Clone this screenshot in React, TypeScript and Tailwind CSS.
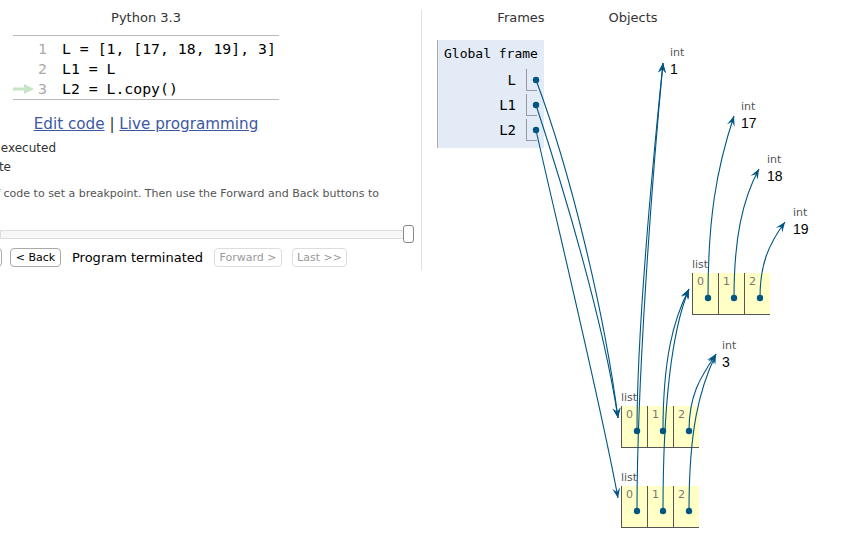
import React from "react";

const C = "#005583";

type Arrow = { d: [number, number, number, number, number, number, number, number] };

const arrows: Arrow["d"][] = [
  // frame -> lists
  [536, 80, 570, 170, 604, 310, 618, 418],
  [536, 105, 564, 190, 603, 320, 618, 418],
  [536, 130, 556, 220, 600, 400, 618, 498],
  // list element 0 -> int 1
  [637, 431, 637, 330, 652, 170, 663, 63],
  [637, 511, 637, 380, 652, 180, 663, 63],
  // element 1 -> inner list
  [663, 431, 663, 360, 673, 320, 689, 289],
  [663, 511, 663, 400, 672, 330, 689, 289],
  // element 2 -> int 3
  [689, 431, 689, 395, 700, 378, 716, 354],
  [689, 511, 689, 430, 699, 390, 716, 354],
  // inner list -> 17 18 19
  [708, 298, 708, 220, 716, 170, 734, 116],
  [734, 298, 734, 240, 742, 200, 759, 169],
  [760, 298, 760, 265, 768, 245, 785, 222],
];

const dots: [number, number][] = [
  [536, 80],
  [536, 105],
  [536, 130],
  [637, 431],
  [663, 431],
  [689, 431],
  [637, 511],
  [663, 511],
  [689, 511],
  [708, 298],
  [734, 298],
  [760, 298],
];

function head(a: Arrow["d"]) {
  const [, , , , cx, cy, ex, ey] = a;
  let dx = ex - cx;
  let dy = ey - cy;
  const len = Math.hypot(dx, dy) || 1;
  dx /= len;
  dy /= len;
  const L = 10;
  const W = 8;
  const px = -dy;
  const py = dx;
  const bx = ex - dx * L;
  const by = ey - dy * L;
  const nx = ex - dx * L * 0.6;
  const ny = ey - dy * L * 0.6;
  return `${ex},${ey} ${bx + (px * W) / 2},${by + (py * W) / 2} ${nx},${ny} ${bx - (px * W) / 2},${by - (py * W) / 2}`;
}

function IntObj({ x, y, v }: { x: number; y: number; v: string }) {
  return (
    <div className="absolute flex flex-col" style={{ left: x, top: y }}>
      <div className="h-[13px] text-[11px] leading-[13px] text-[#555] font-['DejaVu_Sans',sans-serif]">int</div>
      <div className="mt-[2px] text-[14px] leading-[16px] text-black font-['Liberation_Sans',sans-serif]">{v}</div>
    </div>
  );
}

function ListObj({ x, y }: { x: number; y: number }) {
  return (
    <div className="absolute flex flex-col" style={{ left: x, top: y }}>
      <div className="h-[13px] text-[11px] leading-[13px] text-[#555] font-['DejaVu_Sans',sans-serif]">list</div>
      <div className="mt-[2px] flex">
        {["0", "1", "2"].map((i) => (
          <div
            key={i}
            className="w-[26px] h-[42px] border-l border-b border-[#555] bg-[#ffffc6] pl-[4px] pt-[2px] text-[11px] leading-[13px] text-[#777] font-['DejaVu_Sans',sans-serif]"
          >
            {i}
          </div>
        ))}
      </div>
    </div>
  );
}

const codeLines = ["L = [1, [17, 18, 19], 3]", "L1 = L", "L2 = L.copy()"];

export default function App() {
  return (
    <div className="relative w-[862px] h-[555px] bg-white overflow-hidden flex font-['DejaVu_Sans',sans-serif] text-[#333]">
      {/* Left panel */}
      <div className="w-[421px] shrink-0 flex flex-col pt-[9px]">
        <div className="ml-[13px] w-[266px] h-[18px] leading-[18px] text-center text-[13px] text-[#333]">Python 3.3</div>
        <div className="ml-[13px] w-[266px] mt-[8px] border-t border-b border-[#bbb] pt-[3px]">
          {codeLines.map((line, i) => (
            <div key={i} className="flex items-center h-[20px] font-['DejaVu_Sans_Mono',monospace] text-[14.8px]">
              <div className="w-[24px] h-[20px] flex items-center">
                {i === 2 && (
                  <svg width="21" height="10" viewBox="0 0 21 10">
                    <rect x="0" y="3.5" width="13" height="3" fill="#c6e4c6" />
                    <polygon points="11,0 21,5 11,10" fill="#c6e4c6" />
                  </svg>
                )}
              </div>
              <div className="w-[10px] text-right text-[#aaa]">{i + 1}</div>
              <div className="ml-[15px] whitespace-pre text-black">{line}</div>
            </div>
          ))}
        </div>
        <div className="ml-[13px] w-[266px] mt-[14px] h-[20px] leading-[20px] text-center text-[15.2px]">
          <a className="text-[#3d58a2] underline">Edit code</a>
          <span className="text-[#333]"> | </span>
          <a className="text-[#3d58a2] underline">Live programming</a>
        </div>
        <div className="mt-[5px] w-[56px] h-[19px] leading-[19px] flex justify-end whitespace-nowrap text-[12px] text-[#333]">
          line that has just executed
        </div>
        <div className="w-[11px] h-[19px] leading-[19px] flex justify-end whitespace-nowrap text-[12px] text-[#333]">
          next line to execute
        </div>
        <div className="mt-[9px] w-[379px] h-[16px] leading-[16px] flex justify-end whitespace-nowrap text-[11px] text-[#555]">
          Click on a line of code to set a breakpoint. Then use the Forward and Back buttons to
        </div>
        <div className="mt-[23px] flex items-center h-[18px]">
          <div className="w-[408px] h-[9px] border border-[#ddd] bg-[#f7f7f7] rounded-r-[3px]" />
          <div className="-ml-[5px] w-[11px] h-[18px] rounded-[3px] border border-[#888] bg-white" />
        </div>
        <div className="mt-[5px] flex items-center h-[19px] text-[11px]">
          <div className="w-[2px] flex justify-end whitespace-nowrap">
            <div className="h-[19px] px-[6px] leading-[17px] border border-[#aaa] rounded-[4px] bg-white">&lt;&lt; First</div>
          </div>
          <div className="ml-[8px] w-[51px] h-[19px] leading-[17px] text-center border border-[#aaa] rounded-[4px] bg-white text-black">
            &lt; Back
          </div>
          <div className="ml-[11px] text-[13px] text-black whitespace-nowrap">Program terminated</div>
          <div className="ml-[11px] w-[68px] h-[19px] leading-[17px] text-center border border-[#ddd] rounded-[4px] bg-white text-[#999]">
            Forward &gt;
          </div>
          <div className="ml-[10px] w-[55px] h-[19px] leading-[17px] text-center border border-[#ddd] rounded-[4px] bg-white text-[#999]">
            Last &gt;&gt;
          </div>
        </div>
      </div>

      {/* Divider */}
      <div className="w-px shrink-0 self-start mt-[10px] h-[260px] bg-[#e0e0e0]" />

      {/* Right panel */}
      <div className="flex flex-col pt-[9px]">
        <div className="flex h-[18px] leading-[18px] text-[13px] text-[#333]">
          <div className="ml-[49px] w-[100px] text-center">Frames</div>
          <div className="ml-[12px] w-[100px] text-center">Objects</div>
        </div>
        <div className="ml-[15px] mt-[13px] w-[107px] h-[108px] bg-[#e2ebf6] border-l border-[#aaa] flex flex-col">
          <div className="pl-[6px] pt-[6px] h-[21px] leading-[16px] text-[13px] font-['DejaVu_Sans_Mono',monospace] text-black whitespace-nowrap">
            Global frame
          </div>
          <div className="mt-[8px] flex flex-col gap-[3px]">
            {["L", "L1", "L2"].map((n) => (
              <div key={n} className="flex items-center h-[22px]">
                <div className="w-[78px] text-right text-[14px] font-['DejaVu_Sans_Mono',monospace] text-black">{n}</div>
                <div className="ml-[10px] w-[11px] h-[22px] border-l border-b border-[#999]" />
              </div>
            ))}
          </div>
        </div>
      </div>

      {/* Heap objects on canvas */}
      <IntObj x={670} y={46} v="1" />
      <IntObj x={741} y={100} v="17" />
      <IntObj x={767} y={153} v="18" />
      <IntObj x={793} y={206} v="19" />
      <IntObj x={722} y={339} v="3" />
      <ListObj x={692} y={258} />
      <ListObj x={621} y={391} />
      <ListObj x={621} y={471} />

      {/* Connectors */}
      <svg className="absolute left-0 top-0 pointer-events-none" width="862" height="555" viewBox="0 0 862 555">
        {arrows.map((a, i) => (
          <g key={i}>
            <path
              d={`M${a[0]},${a[1]} C${a[2]},${a[3]} ${a[4]},${a[5]} ${a[6]},${a[7]}`}
              fill="none"
              stroke={C}
              strokeWidth="1.1"
            />
            <polygon points={head(a)} fill={C} />
          </g>
        ))}
        {dots.map(([x, y], i) => (
          <circle key={i} cx={x} cy={y} r="3.2" fill={C} />
        ))}
      </svg>
    </div>
  );
}
